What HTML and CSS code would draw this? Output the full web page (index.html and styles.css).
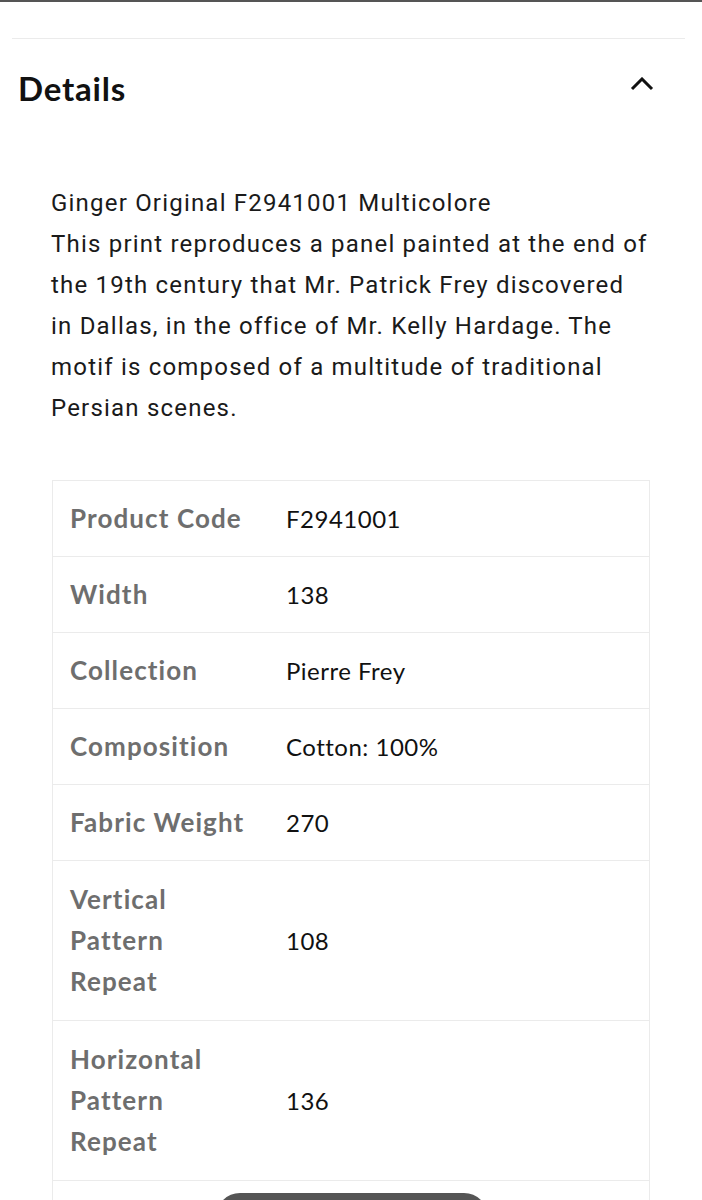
FILE: index.html
```html
<!DOCTYPE html>
<html lang="en">
<head>
<meta charset="utf-8">
<title>Details</title>
<link rel="stylesheet" href="styles.css">
</head>
<body>
<div class="topbar"></div>
<div class="divider"></div>
<section class="accordion">
  <div class="acc-header">
    <h2 class="acc-title">Details</h2>
    <svg class="chevron" width="24" height="14" viewBox="0 0 24 14" aria-hidden="true">
      <path d="M2 12 L12 2 L22 12" fill="none" stroke="#111" stroke-width="3" stroke-linecap="butt" stroke-linejoin="miter"/>
    </svg>
  </div>
  <div class="acc-body">
    <p class="desc">Ginger Original F2941001 Multicolore<br>This print reproduces a panel painted at the end of the 19th century that Mr. Patrick Frey discovered in Dallas, in the office of Mr. Kelly Hardage. The motif is composed of a multitude of traditional Persian scenes.</p>
    <div class="specs">
      <div class="row"><div class="label">Product Code</div><div class="value">F2941001</div></div>
      <div class="row"><div class="label">Width</div><div class="value">138</div></div>
      <div class="row"><div class="label">Collection</div><div class="value">Pierre Frey</div></div>
      <div class="row"><div class="label">Composition</div><div class="value">Cotton: 100%</div></div>
      <div class="row"><div class="label">Fabric Weight</div><div class="value">270</div></div>
      <div class="row row-tall"><div class="label">Vertical Pattern Repeat</div><div class="value">108</div></div>
      <div class="row row-tall"><div class="label">Horizontal Pattern Repeat</div><div class="value">136</div></div>
      <div class="row-action"><button class="btn" type="button" aria-label="More"></button></div>
    </div>
  </div>
</section>
</body>
</html>
```

FILE: styles.css
```css
* { box-sizing: border-box; }
html, body { margin: 0; padding: 0; background: #fff; }
body { font-family: "Lato", "Noto Sans", sans-serif; color: #111; overflow: hidden; height: 1200px; }

.topbar { height: 2px; background: #555; }
.divider { height: 1px; background: #ebebeb; margin: 36px 17px 0 12px; }

.accordion { padding: 0 18px; }
.acc-header {
  display: flex; align-items: center; justify-content: space-between;
  margin-top: 29px; height: 40px; padding-right: 30px;
}
.acc-title { margin: 0; font-weight: 700; font-size: 33px; line-height: 40px; letter-spacing: 0.8px; color: #111; }
.chevron { display: block; margin-top: -8px; }

.acc-body { padding: 0 34px 0 33px; }
.desc {
  margin: 75px 0 0 0;
  font-family: "Roboto", sans-serif; font-size: 24px; line-height: 41px; color: #1a1a1a;
  letter-spacing: 1.2px;
}

.specs { margin-top: 51px; margin-left: 1px; border: 1px solid #ebebeb; border-bottom: none; }
.row { display: grid; grid-template-columns: 233px 1fr; align-items: center; border-bottom: 1px solid #ebebeb; padding: 17px 0; }
.row-tall { padding: 18px 0; }
.label { padding: 0 32px 0 17px; font-weight: 700; font-size: 26px; line-height: 41px; color: #6e6e6e; letter-spacing: 1.1px; }
.value { font-size: 24px; line-height: 41px; color: #111; letter-spacing: 0.5px; }

.row-action { display: flex; justify-content: center; padding-top: 12px; }
.btn {
  width: 272px; height: 48px; border: none; border-radius: 24px; background: #555;
  margin-left: 2px;
}
```
